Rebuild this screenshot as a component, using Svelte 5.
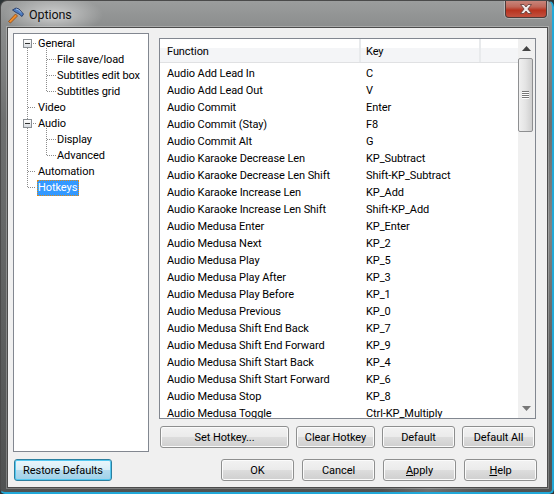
<script>
	const functions = [
		["Audio Add Lead In", "C"],
		["Audio Add Lead Out", "V"],
		["Audio Commit", "Enter"],
		["Audio Commit (Stay)", "F8"],
		["Audio Commit Alt", "G"],
		["Audio Karaoke Decrease Len", "KP_Subtract"],
		["Audio Karaoke Decrease Len Shift", "Shift-KP_Subtract"],
		["Audio Karaoke Increase Len", "KP_Add"],
		["Audio Karaoke Increase Len Shift", "Shift-KP_Add"],
		["Audio Medusa Enter", "KP_Enter"],
		["Audio Medusa Next", "KP_2"],
		["Audio Medusa Play", "KP_5"],
		["Audio Medusa Play After", "KP_3"],
		["Audio Medusa Play Before", "KP_1"],
		["Audio Medusa Previous", "KP_0"],
		["Audio Medusa Shift End Back", "KP_7"],
		["Audio Medusa Shift End Forward", "KP_9"],
		["Audio Medusa Shift Start Back", "KP_4"],
		["Audio Medusa Shift Start Forward", "KP_6"],
		["Audio Medusa Stop", "KP_8"],
		["Audio Medusa Toggle", "Ctrl-KP_Multiply"],
	];

	const tree = [
		{ label: "General", level: 0, box: true },
		{ label: "File save/load", level: 1 },
		{ label: "Subtitles edit box", level: 1 },
		{ label: "Subtitles grid", level: 1 },
		{ label: "Video", level: 0 },
		{ label: "Audio", level: 0, box: true },
		{ label: "Display", level: 1 },
		{ label: "Advanced", level: 1 },
		{ label: "Automation", level: 0 },
		{ label: "Hotkeys", level: 0, selected: true },
	];
</script>

<div class="window">
	<div class="titlebar">
		<svg class="appicon" width="17" height="17" viewBox="0 0 17 17">
			<path d="M0.5 14.5 L7.5 7 L9.5 9 L2.5 16 Z" fill="#f08c2a" stroke="#8a4a18" stroke-width="0.8" />
			<path d="M4.5 3 L8 1 L11 2 L15.5 7 L14 9.5 L11 7 L8 5.5 Z" fill="#4f7fc4" stroke="#1c2f5c" stroke-width="0.8" />
			<path d="M8 2 L10.5 2.8 L13 5.5" fill="none" stroke="#b8d2f0" stroke-width="0.8" />
		</svg>
		<span class="title">Options</span>
		<div class="close">
			<svg width="16" height="12" viewBox="0 0 16 12">
				<path d="M2.5 1.5 H6 L8 4 L10 1.5 H13.5 L9.9 6 L13.5 10.5 H10 L8 8 L6 10.5 H2.5 L6.1 6 Z" fill="#f0ecec" stroke="#5e3a36" stroke-width="0.8" />
			</svg>
		</div>
	</div>

	<div class="client">
		<div class="main">
			<div class="tree">
				<svg class="lines" width="60" height="170" viewBox="0 0 60 170">
					<g stroke="#8c8c8c" stroke-dasharray="1 1" fill="none">
						<path d="M13.5 14 V153.5" />
						<path d="M32.5 14 V57.5 M33 25.5 H42 M33 41.5 H42 M33 57.5 H42" />
						<path d="M32.5 94 V121.5 M33 105.5 H42 M33 121.5 H42" />
						<path d="M19 9.5 H22 M14 73.5 H22 M19 89.5 H22 M14 137.5 H22 M14 153.5 H22" />
					</g>
				</svg>
				{#each tree as item}
					<div class="node" class:child={item.level === 1}>
						{#if item.box}
							<span class="box"></span>
						{/if}
						<span class="label" class:selected={item.selected}>{item.label}</span>
					</div>
				{/each}
			</div>

			<div class="right">
				<div class="panel">
					<div class="list">
						<div class="head">
							<div class="col-fn">Function</div>
							<div class="col-key">Key</div>
							<div class="col-rest"></div>
						</div>
						<div class="rows">
							{#each functions as row}
								<div class="row">
									<span class="col-fn">{row[0]}</span>
									<span class="col-key">{row[1]}</span>
								</div>
							{/each}
						</div>
					</div>
					<div class="scrollbar">
						<div class="arrow">
							<svg width="9" height="5" viewBox="0 0 9 5"><path d="M4.5 0 L9 5 H0 Z" fill="#444" /></svg>
						</div>
						<div class="track">
							<div class="thumb">
								<span></span><span></span><span></span><span></span>
							</div>
						</div>
						<div class="arrow">
							<svg width="9" height="5" viewBox="0 0 9 5"><path d="M0 0 H9 L4.5 5 Z" fill="#777" /></svg>
						</div>
					</div>
				</div>
				<div class="actions">
					<button class="w-set">Set Hotkey...</button>
					<button class="w-clear">Clear Hotkey</button>
					<button class="w-def">Default</button>
					<button class="w-def">Default All</button>
				</div>
			</div>
		</div>

		<div class="footer">
			<button class="restore">Restore Defaults</button>
			<div class="spacer"></div>
			<button class="w-foot">OK</button>
			<button class="w-foot">Cancel</button>
			<button class="w-foot"><u>A</u>pply</button>
			<button class="w-foot"><u>H</u>elp</button>
		</div>
	</div>
</div>

<style>
	:global(body) {
		margin: 0;
		background: #2c3436;
	}
	.window {
		width: 554px;
		height: 494px;
		box-sizing: border-box;
		padding: 0 4px 4px 6px;
		position: relative;
		overflow: hidden;
		border: 1px solid #4a4a4a;
		border-right: 2px solid #22a8d8;
		border-bottom: 2px solid #22a8d8;
		border-radius: 7px 7px 5px 5px;
		font-family: Roboto, sans-serif;
		font-size: 11px;
		letter-spacing: -0.08px;
		color: #000;
		background:
			radial-gradient(ellipse 50px 20px at 52px 14px, rgba(255, 255, 255, 0.55), rgba(255, 255, 255, 0)),
			linear-gradient(115deg, rgba(255, 255, 255, 0) 78%, rgba(255, 255, 255, 0.18) 84%, rgba(255, 255, 255, 0) 92%),
			linear-gradient(#9b9d9d 0, #8a8c8c 28px, #6e7070 120px, #505252 100%);
	}
	.titlebar {
		height: 26px;
		display: flex;
		align-items: center;
		gap: 4px;
		position: relative;
	}
	.appicon {
		margin-left: 1px;
		margin-top: 2px;
	}
	.title {
		font-size: 12.5px;
		color: #101010;
	}
	.close {
		position: absolute;
		top: -1px;
		right: 1px;
		width: 42px;
		height: 18px;
		box-sizing: border-box;
		display: flex;
		align-items: center;
		justify-content: center;
		border: 1px solid #4e3a38;
		border-top: 0;
		border-radius: 0 0 4px 4px;
		box-shadow: 0 0 0 1px rgba(255, 255, 255, 0.3);
		background: linear-gradient(#c98a80 0%, #c0685a 40%, #b8331f 60%, #c2513f 100%);
	}
	.client {
		width: 541px;
		height: 461px;
		box-sizing: border-box;
		background: #f0f0f0;
		border: 1px solid #4c4c4c;
		box-shadow: 0 0 0 1px rgba(255, 255, 255, 0.25);
		padding: 5px 10px 5px 5px;
	}
	.main {
		display: flex;
		gap: 10px;
	}
	.tree {
		position: relative;
		width: 136px;
		height: 419px;
		box-sizing: border-box;
		background: #fff;
		border: 1px solid #828790;
		flex: none;
	}
	.lines {
		position: absolute;
		top: 0;
		left: 0;
	}
	.node {
		position: relative;
		height: 16px;
		line-height: 16px;
		padding-left: 23px;
		white-space: nowrap;
	}
	.node:first-of-type {
		margin-top: 2px;
	}
	.node.child {
		padding-left: 42px;
	}
	.box {
		position: absolute;
		left: 9px;
		top: 3px;
		width: 9px;
		height: 9px;
		box-sizing: border-box;
		border: 1px solid #8a8f94;
		background: linear-gradient(#fff, #d8dce0);
	}
	.box::after {
		content: "";
		position: absolute;
		left: 1px;
		top: 3px;
		width: 5px;
		height: 1px;
		background: #333;
	}
	.label {
		display: inline-block;
		position: relative;
		padding: 0 1px;
	}
	.label.selected {
		background: #3399ff;
		color: #fff;
		outline: 1px dotted #d88a1a;
		outline-offset: -1px;
		padding: 0 2px 0 1px;
	}
	.right {
		flex: 1;
		min-width: 0;
		padding-top: 5px;
	}
	.panel {
		display: flex;
		width: 377px;
		height: 381px;
		box-sizing: border-box;
		border: 1px solid #828790;
		background: #fff;
	}
	.list {
		flex: 1;
		min-width: 0;
		overflow: hidden;
	}
	.head {
		display: flex;
		height: 24px;
		line-height: 26px;
		box-sizing: border-box;
		border-bottom: 1px solid #e0e1e3;
		background: linear-gradient(#fff 0, #fff 40%, #f4f5f7 40%, #f4f5f7 100%);
		margin-bottom: 2px;
	}
	.head > div {
		box-sizing: border-box;
		border-right: 2px solid #e8eaec;
	}
	.col-fn {
		display: inline-block;
		width: 201px;
		padding-left: 7px;
		box-sizing: border-box;
	}
	.col-key {
		display: inline-block;
		width: 120px;
		padding-left: 5px;
		box-sizing: border-box;
	}
	.col-rest {
		flex: 1;
		border-right: 0 !important;
	}
	.row {
		display: flex;
		height: 17px;
		line-height: 17px;
		white-space: nowrap;
	}
	.scrollbar {
		width: 17px;
		flex: none;
		display: flex;
		flex-direction: column;
		background: #f0f0f0;
	}
	.arrow {
		height: 19px;
		display: flex;
		align-items: center;
		justify-content: center;
	}
	.track {
		flex: 1;
	}
	.thumb {
		width: 15px;
		height: 74px;
		box-sizing: border-box;
		border: 1px solid #8e8f91;
		border-radius: 2px;
		background: linear-gradient(90deg, #f0f0f0, #e4e4e4 50%, #cfcfcf);
		display: flex;
		flex-direction: column;
		align-items: center;
		justify-content: center;
	}
	.thumb span {
		width: 7px;
		height: 1px;
		background: #777;
		box-shadow: 0 1px 0 #fff;
		margin-bottom: 1px;
	}
	.actions {
		display: flex;
		margin: 7px 0 0 1px;
		gap: 7px;
	}
	button {
		font: inherit;
		letter-spacing: inherit;
		color: #000;
		height: 22px;
		padding: 0;
		box-sizing: border-box;
		border: 1px solid #8e8f8f;
		border-radius: 3px;
		background: linear-gradient(#f2f2f2 0, #ebebeb 48%, #dddddd 50%, #cfcfcf 100%);
		box-shadow: inset 0 0 0 1px #fbfbfb;
	}
	.w-set {
		width: 129px;
	}
	.w-clear {
		width: 79px;
	}
	.w-def {
		width: 73px;
	}
	.footer {
		display: flex;
		margin-top: 7px;
		gap: 8px;
		align-items: flex-start;
	}
	.restore {
		width: 98px;
		margin-left: 1px;
		border-color: #2c7f9f;
		background: linear-gradient(#eaf6fb 0, #d8eef7 48%, #b5dcef 50%, #9fd0e8 100%);
		box-shadow: inset 0 0 0 1px #54c8f0;
	}
	.spacer {
		flex: 1;
	}
	.w-foot {
		width: 73px;
	}
</style>
